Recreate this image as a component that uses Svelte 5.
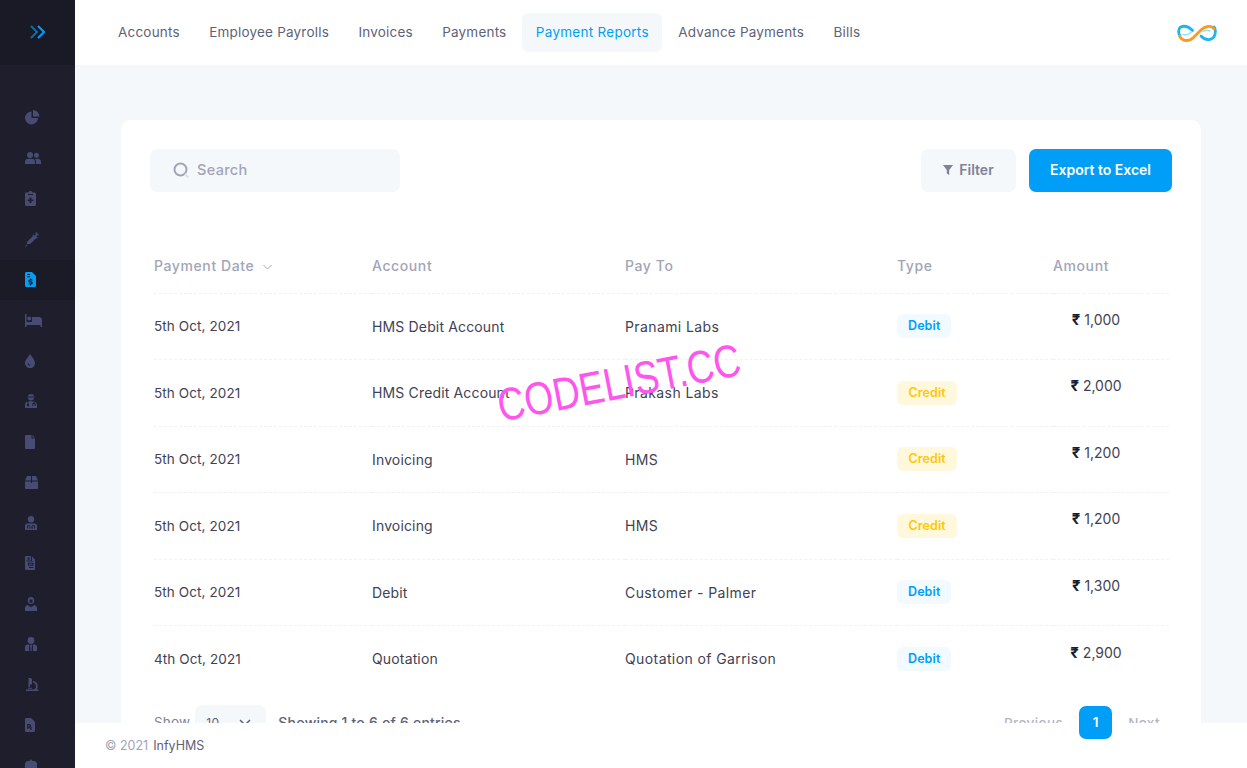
<script>
  const nav = ['Accounts','Employee Payrolls','Invoices','Payments','Payment Reports','Advance Payments','Bills'];
  const rows = [
    ['5th Oct, 2021','HMS Debit Account','Pranami Labs','Debit','1,000'],
    ['5th Oct, 2021','HMS Credit Account','Prakash Labs','Credit','2,000'],
    ['5th Oct, 2021','Invoicing','HMS','Credit','1,200'],
    ['5th Oct, 2021','Invoicing','HMS','Credit','1,200'],
    ['5th Oct, 2021','Debit','Customer - Palmer','Debit','1,300'],
    ['4th Oct, 2021','Quotation','Quotation of Garrison','Debit','2,900']
  ];
  const icons = [
    { w:15, h:15, d:'M6.5 1.5A6.5 6.5 0 1 0 13 8H6.5V1.5ZM8 0v6.5h6.5A6.5 6.5 0 0 0 8 0Z' },
    { w:16, h:12, d:'M5 0a3 3 0 1 1 0 6 3 3 0 0 1 0-6Zm6.5 .7a2.5 2.5 0 1 1 0 5 2.5 2.5 0 0 1 0-5ZM0 12V9.8C0 8 1.5 6.8 3 6.8h4c1.6 0 3 1.2 3 3V12H0Zm11 0V9.5c0-1-.4-1.9-1-2.6.4-.1.8-.2 1.2-.2h1.6C14.600 6.700 16 8 16 9.800V12h-5Z' },
    { w:11, h:15, d:'M3.500 1.500C3.500.7 4.500 0 5.500 0s2 .7 2 1.500H9.500c.8 0 1.500.7 1.500 1.500v10.500c0 .8-.7 1.500-1.500 1.500h-8C.7 15 0 14.300 0 13.500V3c0-.8.7-1.500 1.500-1.500h2ZM3 3v1H8V3H3Zm1.500 3.500v2h-2V10h2v2H6.500v-2h2V8.500h-2v-2h-2Z', evenodd:true },
    { w:14, h:15, d:'M11 0l3 3-.8.8-.7-.7-1.200 1.200 1.500 1.500-.8.8-.7-.7-6.200 6.200H2.700L.8 15 0 14.200 2 12.300V9.900L8.200 3.700 7.500 3l.8-.8L9.800 3.700 11 2.500 10.300 1.800 11 0Z' },
    { w:11, h:15, d:'M1.500 0H7l4 4v9.500c0 .8-.7 1.500-1.500 1.500h-8C.7 15 0 14.300 0 13.500v-12C0 .7.7 0 1.500 0ZM2 2v1h3V2H2Zm0 2.200v1h3v-1H2ZM5 6.500v.9c-1 .1-1.800.7-1.800 1.600 0 1.900 3 1.300 3 2.100 0 .4-1.900.3-2.700-.1v1.100c.4.200 1 .3 1.500.4v.9h1v-.9c1-.1 1.800-.7 1.800-1.600 0-1.900-3-1.300-3-2.100 0-.4 1.700-.3 2.500.1V7.400c-.4-.2-.8-.3-1.300-.4v-.5H5Z', evenodd:true },
    { w:17, h:13, d:'M0 0h1.500v8H7V3h7c1.700 0 3 1.300 3 3v7h-1.500v-2h-14v2H0V0Zm4.200 2.500a2 2 0 1 1 0 4 2 2 0 0 1 0-4Z' },
    { w:10, h:14, d:'M5 0C6.500 2.600 10 5.700 10 9.200A5 5 0 0 1 0 9.200C0 5.700 3.500 2.600 5 0ZM2.600 9.300c0 1.500 1 2.500 2.500 2.500v-1c-.9 0-1.500-.6-1.500-1.500h-1Z', evenodd:true },
    { w:12, h:14, d:'M6 0a3.300 3.300 0 0 1 3.300 3.300C9.300 5.200 7.800 6.600 6 6.600S2.700 5.200 2.700 3.300A3.300 3.300 0 0 1 6 0ZM3 2.400v1.200h6V2.400H3ZM2.500 7.600v2.500a1.200 1.200 0 1 0 1 0V7.300c.8-.2 4.200-.2 5 0v1.500c-.7.2-1.200.8-1.200 1.600V12h1v-1.600c0-.9 1.400-.9 1.400 0V12h1v-1.600c0-.8-.5-1.400-1.200-1.600V7.500C11 8 12 9.600 12 11v3H0v-3c0-1.400 1-3 2.500-3.400Z', evenodd:true },
    { w:10, h:14, d:'M1 0h5.500v3.500H10V13a1 1 0 0 1-1 1H1a1 1 0 0 1-1-1V1a1 1 0 0 1 1-1Zm6.500 0L10 2.500H7.500V0Z' },
    { w:13, h:13, d:'M2 0h4v4.500H0L2 0Zm5 0h4l2 4.500H7V0ZM0 5.500h6V7h1V5.500h6V12a1 1 0 0 1-1 1H1a1 1 0 0 1-1-1V5.500Z' },
    { w:12, h:14, d:'M6 0a3.200 3.200 0 1 1 0 6.400A3.200 3.200 0 0 1 6 0ZM2 7.500h8c1.200.3 2 1.400 2 2.600V14H0v-3.900c0-1.200.8-2.300 2-2.600ZM3.500 9a1.600 1.600 0 0 0-1.500 1.700V12.500h1.200v-1h-.3v-.8c0-1 1.800-1 1.800 0v.8h-.4v1h1.200v-1.800C5.500 9.800 4.700 9 3.500 9Zm5 0c-1.200 0-2 .8-2 1.700v1.800h1.200v-1h-.3v-.8c0-1 1.800-1 1.800 0v.8h-.4v1H10V10.700C10 9.800 9.600 9 8.500 9Z', evenodd:true },
    { w:10, h:14, d:'M1 0h4.500l.5.5v4H1.500v1H8.500V5H7V.5L10 3.500V13a1 1 0 0 1-1 1H1a1 1 0 0 1-1-1V1a1 1 0 0 1 1-1Zm1.500 1.500v2.200h2.200V1.500H2.500ZM3 6.800v3h5.500v-3H3Zm1 1H7.500v1H4v-1ZM4 11v1h4.500v-1H4Z', evenodd:true },
    { w:12, h:14, d:'M6 0c2 0 3.300 1.500 3.300 3.400C9.300 5.400 8 7 6 7S2.700 5.400 2.700 3.400C2.700 1.500 4 0 6 0ZM4.500 2.500v2.200c0 .6.7 1 1.500 1s1.500-.4 1.500-1V2.500h-3ZM2.500 8l3.500 2.200L9.500 8c1.400.4 2.500 1.600 2.500 3.100V14H0v-2.900C0 9.600 1.100 8.400 2.500 8Z', evenodd:true },
    { w:12, h:14, d:'M6 0a3.400 3.400 0 1 1 0 6.800A3.400 3.400 0 0 1 6 0ZM2.400 7.500h1.700V14H0v-3.900C0 8.700 1 7.500 2.400 7.500Zm3 0h1.200l.4 1-.4 3 .1 2.500H5.300l.1-2.500-.4-3 .4-1Zm2.500 0h1.700C11 7.500 12 8.700 12 10.100V14H7.900V7.500Z' },
    { w:14, h:14, d:'M3.500 0h2.800v1h.7v5.500H5V9H3.500V0ZM8 2.700c2.600.5 4.800 2.500 4.800 5.500 0 1.300-.4 2.400-1.200 3.300H13.500V13H1v-1.500h8c1.300-.6 2-1.900 2-3.300 0-1.800-1.300-3.300-3-3.700V2.700ZM3 9.800h4v1H3v-1Z' },
    { w:10, h:14, d:'M1 0h5l4 4v9a1 1 0 0 1-1 1H1a1 1 0 0 1-1-1V1a1 1 0 0 1 1-1Zm1.200 6v5H3.400V9.400h.6l1.900 2.700h1.300l-1-1.400 1.100-1.400H6.100l-.6.800-.4-.6C5.800 9.100 6.200 8.500 6.200 7.900 6.200 6.800 5.400 6 4.400 6H2.200Zm1.200 1.100h.9a.8.8 0 0 1 0 1.400h-.9V7.100Z', evenodd:true },
    { w:12, h:14, d:'M3 2h1.500l1-1.500h1L7.500 2H9c1.700 0 3 1.300 3 3v9H0V5c0-1.700 1.300-3 3-3Z' }
  ];
</script>

<div class="shell">
  <aside class="sidebar">
    <div class="brand">
      <svg width="15" height="14" viewBox="0 0 15 14" fill="none" stroke-width="2">
        <path d="M1 1l6 6-6 6" stroke="#0b6ea8"/>
        <path d="M8 1l6 6-6 6" stroke="#009ef7"/>
      </svg>
    </div>
    <div class="menu">
      {#each icons as ic, i}
        <div class="item" class:active={i === 4}>
          <svg width={ic.w} height={ic.h} viewBox="0 0 {ic.w} {ic.h}">
            <path d={ic.d} fill-rule={ic.evenodd ? 'evenodd' : 'nonzero'} />
          </svg>
        </div>
      {/each}
    </div>
  </aside>

  <div class="content">
    <header>
      <nav>
        {#each nav as n}
          <span class="tab" class:current={n === 'Payment Reports'}>{n}</span>
        {/each}
      </nav>
      <svg class="logo" width="40" height="20" viewBox="0 0 40 20" fill="none" stroke-width="2.800" stroke-linecap="round">
        <path d="M15.500 7.500C11 2.500 1.800 .8 1.600 8.500c0 1.500.4 3 1.300 4" stroke="#1cb4f2"/>
        <path d="M24 13c5 5.500 14.300 5 14.400-5 0-1.500-.5-3-1.400-4" stroke="#1cb4f2"/>
        <path d="M6 11.500c3 .8 6-.3 8.500-2.500M26 8.500c2-1.500 5-1.500 7-.5" stroke="#8ce6f6" stroke-width="1.500"/>
        <path d="M2.500 13c3 6 10 5.500 14 1.500L24 7c4-4 10-5 13-1" stroke="#f79a25"/>
      </svg>
    </header>

    <main>
      <section class="card">
        <div class="toolbar">
          <div class="search">
            <svg width="17" height="17" viewBox="0 0 17 17" fill="none" stroke-width="2">
              <circle cx="7.500" cy="7.500" r="6" stroke="#a1a5b7"/>
              <path d="M12 12l3.500 3.500" stroke="#e0e2ea"/>
            </svg>
            <span>Search</span>
          </div>
          <div class="actions">
            <button class="filter">
              <svg width="10" height="10" viewBox="0 0 10 10"><path d="M0 0h10L6.200 5v5L3.800 8.500V5L0 0Z" fill="#7e8299"/></svg>
              Filter
            </button>
            <button class="export">Export to Excel</button>
          </div>
        </div>

        <table>
          <thead>
            <tr>
              <th class="c1">Payment Date
                <svg width="9" height="6" viewBox="0 0 9 6" fill="none"><path d="M.5 1l4 4 4-4" stroke="#a1a5b7"/></svg>
              </th>
              <th class="c2">Account</th>
              <th class="c3">Pay To</th>
              <th class="c4">Type</th>
              <th class="c5">Amount</th>
            </tr>
          </thead>
          <tbody>
            {#each rows as r}
              <tr>
                <td>{r[0]}</td>
                <td>{r[1]}</td>
                <td>{r[2]}</td>
                <td><span class="badge {r[3].toLowerCase()}">{r[3]}</span></td>
                <td class="amount"><span class="rupee">₹</span> {r[4]}</td>
              </tr>
            {/each}
          </tbody>
        </table>

        <div class="pager">
          <div class="show">
            <span>Show</span>
            <div class="select">
              <span>10</span>
              <svg width="12" height="7" viewBox="0 0 12 7" fill="none" stroke-width="1.500"><path d="M1 1l5 5 5-5" stroke="#5e6278"/></svg>
            </div>
            <span class="entries">Showing 1 to 6 of 6 entries</span>
          </div>
          <div class="pages">
            <span class="dim">Previous</span>
            <span class="page">1</span>
            <span class="dim">Next</span>
          </div>
        </div>
      </section>
    </main>

    <footer><span class="year">© 2021</span> <span>InfyHMS</span></footer>
  </div>

  <div class="stamp">CODELIST.CC</div>
</div>

<style>
  :global(body) { margin: 0; }
  .shell {
    display: flex;
    width: 1247px;
    height: 768px;
    overflow: hidden;
    position: relative;
    font-family: Inter, "Liberation Sans", sans-serif;
    font-size: 13.5px;
    color: #3f4254;
  }
  .sidebar { width: 75px; flex: none; background: #1e1e2d; display: flex; flex-direction: column; }
  .brand { height: 65px; flex: none; background: #1a1a27; display: flex; align-items: center; padding-left: 30px; padding-bottom: 1px; box-sizing: border-box; }
  .menu { padding-top: 32.500px; display: flex; flex-direction: column; }
  .item { height: 40.500px; flex: none; display: flex; align-items: center; padding-left: 25px; }
  .item svg { fill: #494b74; flex: none; }
  .item.active { background: #1b1b28; }
  .item.active svg { fill: #009ef7; }

  .content { flex: 1; min-width: 0; display: flex; flex-direction: column; }
  header { height: 65px; flex: none; background: #fff; display: flex; align-items: center; justify-content: space-between; padding: 0 30px 0 29.500px; box-sizing: border-box; }
  nav { display: flex; gap: 2.400px; }
  .tab { padding: 0 13.500px; height: 39px; line-height: 39px; border-radius: 6px; color: #5e6278; font-weight: 400; white-space: nowrap; letter-spacing: .2px; }
  .tab.current { background: #f5f8fa; color: #009ef7; letter-spacing: .27px; }

  main { flex: 1; min-height: 0; background: #f5f8fa; padding: 55px 46px 0 46px; }
  .card { background: #fff; border-radius: 10px; padding: 29px 29px 0 29px; height: 640px; box-sizing: border-box; }
  .toolbar { display: flex; justify-content: space-between; align-items: center; }
  .search { width: 250px; height: 43px; box-sizing: border-box; background: #f5f8fa; border-radius: 7px; display: flex; align-items: center; gap: 7px; padding: 0 0 2px 23px; color: #a1a5b7; font-size: 14.500px; font-weight: 500; letter-spacing: .3px; }
  .search svg { margin-top: 2px; }
  .actions { display: flex; gap: 13px; }
  button { height: 43px; border: 0; border-radius: 7px; font: inherit; font-size: 14px; font-weight: 600; display: flex; align-items: center; justify-content: center; gap: 6px; padding: 0 0 2px; }
  .filter { width: 95px; background: #f5f8fa; color: #7e8299; }
  .export { width: 143px; background: #009ef7; color: #fff; }

  table { border-collapse: collapse; table-layout: fixed; width: 1015px; margin: 52px 0 0 4px; }
  th { text-align: left; padding: 0 0 6px; height: 49px; box-sizing: border-box; font-weight: 500; font-size: 14px; letter-spacing: .6px; color: #a1a5b7; vertical-align: middle; white-space: nowrap; }
  th svg { margin-left: 4px; vertical-align: middle; }
  .c1 { width: 218px; }
  .c2 { width: 253px; }
  .c3 { width: 272px; }
  .c4 { width: 156px; }
  td { height: 66.500px; padding: 0 0 .5px; box-sizing: border-box; border-top: 1px dashed #eff2f5; white-space: nowrap; vertical-align: middle; font-size: 14px; letter-spacing: .4px; }
  td:first-child { font-size: 13.500px; letter-spacing: .1px; }
  td:nth-child(2) { letter-spacing: .15px; }
  .amount { padding: 0 30px 14px 0; text-align: center; letter-spacing: 0; }
  .rupee { font-weight: 700; font-size: 15px; color: #181c32; }
  .badge { display: inline-block; height: 24px; line-height: 24px; padding: 0 11px; border-radius: 6px; font-size: 12.500px; font-weight: 600; letter-spacing: .1px; }
  .debit { background: #f1faff; color: #009ef7; }
  .credit { background: #fff8dd; color: #ffc700; padding: 0 11.500px; }

  .pager { display: flex; justify-content: space-between; align-items: flex-start; margin-top: 13px; padding: 0 12px 0 4px; }
  .show { display: flex; align-items: center; gap: 5px; color: #7e8299; letter-spacing: .2px; }
  .select { width: 71px; height: 34px; box-sizing: border-box; background: #f5f8fa; border-radius: 7px; color: #5e6278; display: flex; align-items: center; justify-content: space-between; padding: 0 15px 0 11px; font-size: 12px; }
  .entries { margin-left: 7px; color: #5e6278; font-weight: 500; font-size: 14px; }
  .pages { display: flex; align-items: center; gap: 16px; font-weight: 500; letter-spacing: .4px; margin-top: 1px; }
  .dim { color: #b5b5c3; }
  .page { position: relative; z-index: 2; width: 33px; height: 33px; line-height: 33px; text-align: center; background: #009ef7; color: #fff; border-radius: 7px; font-weight: 600; }

  footer { position: relative; z-index: 1; height: 45px; flex: none; background: #fff; display: flex; align-items: center; gap: 5px; padding-left: 30px; font-size: 12.500px; color: #5e6278; }
  .year { color: #a1a5b7; }

  .stamp {
    position: absolute;
    left: 498px;
    top: 381px;
    z-index: 5;
    font-family: "Liberation Sans", sans-serif;
    font-size: 46px;
    color: #ff55ee;
    white-space: nowrap;
    transform-origin: left center;
    transform: rotate(-11deg) scaleX(.81);
    line-height: 50px;
  }
</style>
